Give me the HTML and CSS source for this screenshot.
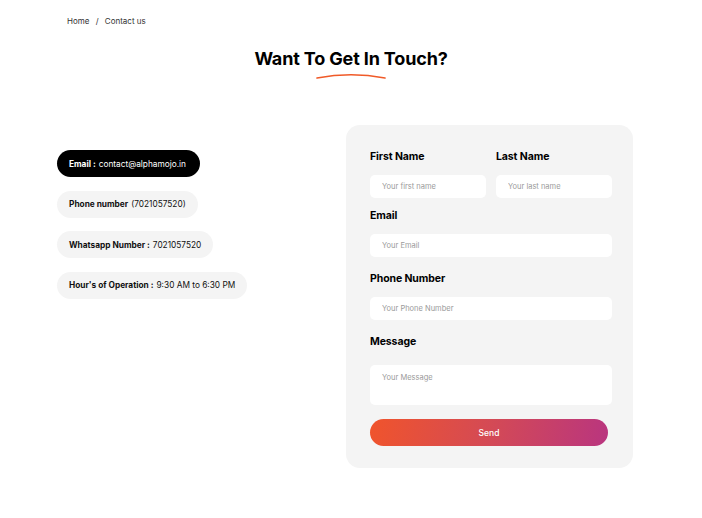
FILE: index.html
```html
<!DOCTYPE html>
<html>
<head>
<meta charset="utf-8">
<link rel="stylesheet" href="styles.css">
</head>
<body>
<div class="page">
  <nav class="crumbs">Home <span class="sep">/</span> Contact us</nav>
  <header class="head">
    <h1 class="title">Want To Get In Touch?</h1>
    <svg class="swoosh" width="70" height="6" viewBox="0 0 70 6"><path d="M1 5 Q35 -1.5 69 5" fill="none" stroke="#f05a28" stroke-width="1.6" stroke-linecap="round"/></svg>
  </header>
  <main class="content">
    <section class="info">
      <div class="pill dark"><b>Email :</b> contact@alphamojo.in</div>
      <div class="pill"><b>Phone number</b> (7021057520)</div>
      <div class="pill"><b>Whatsapp Number :</b> 7021057520</div>
      <div class="pill"><b>Hour's of Operation :</b> 9:30 AM to 6:30 PM</div>
    </section>
    <form class="card">
      <div class="row">
        <div class="field">
          <label class="label">First Name</label>
          <input class="input" placeholder="Your first name">
        </div>
        <div class="field">
          <label class="label">Last Name</label>
          <input class="input" placeholder="Your last name">
        </div>
      </div>
      <div class="field wide">
        <label class="label">Email</label>
        <input class="input" placeholder="Your Email">
      </div>
      <div class="field wide">
        <label class="label">Phone Number</label>
        <input class="input" placeholder="Your Phone Number">
      </div>
      <div class="field">
        <label class="label">Message</label>
        <textarea class="input area" placeholder="Your Message"></textarea>
      </div>
      <button type="button" class="send">Send</button>
    </form>
  </main>
</div>
</body>
</html>
```

FILE: styles.css
```css
* { box-sizing: border-box; }
body { margin: 0; background: #fff; font-family: Inter, "Noto Sans", sans-serif; color: #000; }
.page { width: 702px; height: 518px; }
.crumbs { padding: 16px 0 0 67px; font-size: 8px; color: #333; height: 27px; }
.sep { margin: 0 4px; }
.head { display: flex; flex-direction: column; align-items: center; margin-top: 20px; }
.title { margin: 0; font-size: 18px; font-weight: 700; letter-spacing: -0.15px; line-height: 24px; }
.swoosh { margin-top: 2px; }
.content { display: flex; margin-top: 46px; padding-left: 57px; }
.info { width: 289px; display: flex; flex-direction: column; align-items: flex-start; gap: 13.5px; padding-top: 25px; }
.pill { height: 27px; display: flex; align-items: center; gap: 3px; padding: 0 12px; border-radius: 14px; background: #f4f4f4; font-size: 8.3px; color: #111; white-space: nowrap; }
.pill b { font-weight: 700; }
.pill.dark { background: #000; color: #fff; padding-right: 14px; }
.card { width: 287px; height: 343px; background: #f4f4f4; border-radius: 14px; padding: 25px 21px 0 24px; display: flex; flex-direction: column; }
.row { display: flex; gap: 10px; }
.row .field { flex: 1; }
.field { display: flex; flex-direction: column; margin-bottom: 11px; }
.field.wide { margin-bottom: 15px; }
.label { font-size: 10.5px; font-weight: 700; line-height: 14px; margin-bottom: 11px; letter-spacing: -0.1px; }
.input { border: none; outline: none; background: #fff; border-radius: 5px; height: 23px; padding: 0 12px; font-family: inherit; font-size: 7.5px; color: #333; width: 100%; }
.input::placeholder { color: #9a9a9a; }
.area { height: 40px; padding-top: 8px; resize: none; margin-top: 5px; }
.send { margin-top: 3px; width: 238px; height: 27px; border: none; border-radius: 14px; background: linear-gradient(100deg, #f0542c 0%, #d44a55 50%, #b9357f 100%); color: #fff; font-family: inherit; font-size: 8.5px; font-weight: 500; }
```
